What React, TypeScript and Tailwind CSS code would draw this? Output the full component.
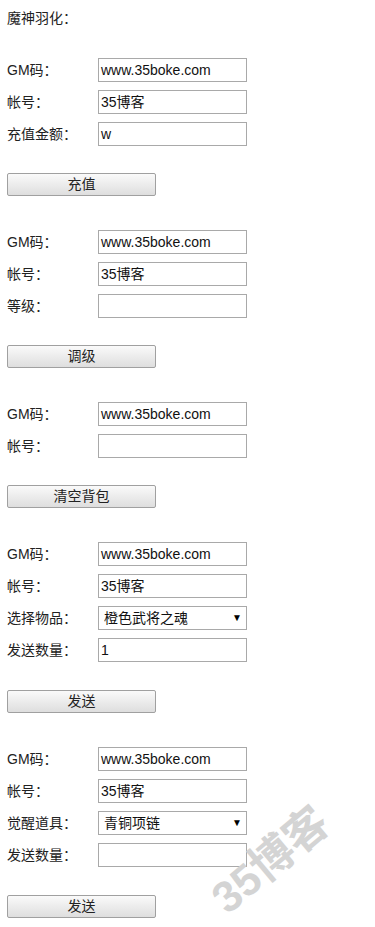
import React from 'react';

type Field = { label: string; value?: string; select?: boolean };
type Section = { fields: Field[]; button: string };

const sections: Section[] = [
  {
    fields: [
      { label: 'GM码：', value: 'www.35boke.com' },
      { label: '帐号：', value: '35博客' },
      { label: '充值金额：', value: 'w' },
    ],
    button: '充值',
  },
  {
    fields: [
      { label: 'GM码：', value: 'www.35boke.com' },
      { label: '帐号：', value: '35博客' },
      { label: '等级：', value: '' },
    ],
    button: '调级',
  },
  {
    fields: [
      { label: 'GM码：', value: 'www.35boke.com' },
      { label: '帐号：', value: '' },
    ],
    button: '清空背包',
  },
  {
    fields: [
      { label: 'GM码：', value: 'www.35boke.com' },
      { label: '帐号：', value: '35博客' },
      { label: '选择物品：', value: '橙色武将之魂', select: true },
      { label: '发送数量：', value: '1' },
    ],
    button: '发送',
  },
  {
    fields: [
      { label: 'GM码：', value: 'www.35boke.com' },
      { label: '帐号：', value: '35博客' },
      { label: '觉醒道具：', value: '青铜项链', select: true },
      { label: '发送数量：', value: '' },
    ],
    button: '发送',
  },
];

function Row({ field }: { field: Field }) {
  return (
    <div className="flex items-center h-[24px]">
      <span className="w-[91px] shrink-0 text-[14px] text-[#222]">{field.label}</span>
      {field.select ? (
        <div className="w-[149px] h-[24px] border border-[#a9a9a9] bg-white flex items-center justify-between pl-[5px] pr-[4px] text-[14px] text-[#111]">
          <span>{field.value}</span>
          <span className="text-[10px] leading-none text-black">▼</span>
        </div>
      ) : (
        <div className="w-[149px] h-[24px] border border-[#a9a9a9] bg-white flex items-center px-[2px] text-[14px] text-[#111]">
          {field.value}
        </div>
      )}
    </div>
  );
}

export default function App() {
  return (
    <div
      className="relative w-[375px] min-h-[927px] bg-white px-[7px] pt-[8px] overflow-hidden"
      style={{ fontFamily: '"Liberation Sans", "Noto Sans CJK SC", sans-serif' }}
    >
      <div className="h-[20px] leading-[20px] text-[14px] text-[#222]">魔神羽化：</div>

      {sections.map((section, i) => (
        <div key={i} className={i === 0 ? 'mt-[30px]' : 'mt-[34px]'}>
          <div className="flex flex-col gap-2">
            {section.fields.map((field, j) => (
              <Row key={j} field={field} />
            ))}
          </div>
          <div
            className={`${section.fields.length > 3 ? 'mt-[28px]' : 'mt-[27px]'} w-[149px] h-[23px] border border-[#a0a0a0] rounded-[2px] bg-gradient-to-b from-[#fafafa] to-[#dedede] flex items-center justify-center text-[14px] text-[#222]`}
          >
            {section.button}
          </div>
        </div>
      ))}

      {/* watermark */}
      <div className="absolute left-[202px] top-[838px] -rotate-[40deg] text-[44px] font-bold leading-none text-[#d4d4d4] select-none pointer-events-none">
        35博客
      </div>
    </div>
  );
}
